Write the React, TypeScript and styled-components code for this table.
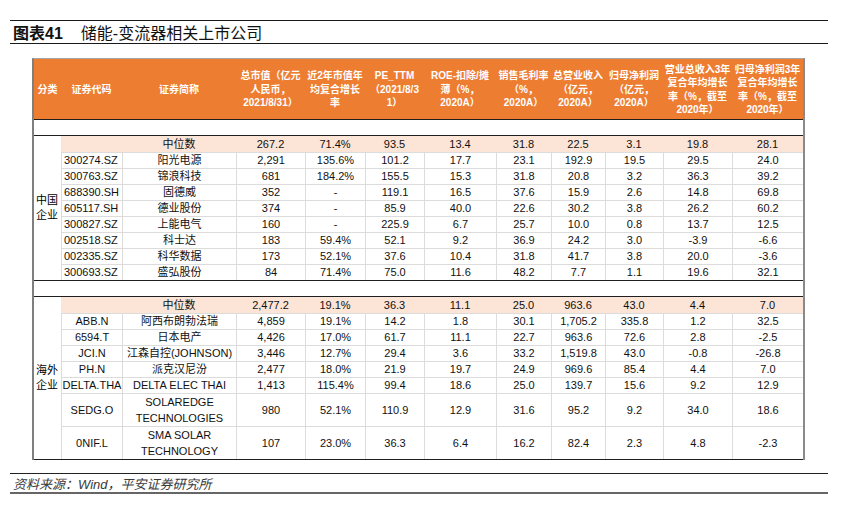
import React from "react";
import styled, { createGlobalStyle } from "styled-components";

const COLS = "27px 61px 114px 69px 60px 59px 72px 55px 54px 58px 69px 71px";
const FONT = `"Liberation Sans", "Noto Sans CJK SC", sans-serif`;

type Row = { code: string; name: string; values: string[]; tall?: boolean };

const HEADERS: string[][] = [
  ["分类"],
  ["证券代码"],
  ["证券简称"],
  ["总市值（亿元", "人民币，", "2021/8/31）"],
  ["近2年市值年", "均复合增长", "率"],
  ["PE_TTM", "（2021/8/3", "1）"],
  ["ROE-扣除/摊", "薄（%，", "2020A）"],
  ["销售毛利率", "（%，", "2020A）"],
  ["总营业收入", "（亿元，", "2020A）"],
  ["归母净利润", "（亿元，", "2020A）"],
  ["营业总收入3年", "复合年均增长", "率（%，截至", "2020年）"],
  ["归母净利润3年", "复合年均增长", "率（%，截至", "2020年）"],
];

const CHINA_MEDIAN = ["267.2", "71.4%", "93.5", "13.4", "31.8", "22.5", "3.1", "19.8", "28.1"];
const CHINA: Row[] = [
  { code: "300274.SZ", name: "阳光电源", values: ["2,291", "135.6%", "101.2", "17.7", "23.1", "192.9", "19.5", "29.5", "24.0"] },
  { code: "300763.SZ", name: "锦浪科技", values: ["681", "184.2%", "155.5", "15.3", "31.8", "20.8", "3.2", "36.3", "39.2"] },
  { code: "688390.SH", name: "固德威", values: ["352", "-", "119.1", "16.5", "37.6", "15.9", "2.6", "14.8", "69.8"] },
  { code: "605117.SH", name: "德业股份", values: ["374", "-", "85.9", "40.0", "22.6", "30.2", "3.8", "26.2", "60.2"] },
  { code: "300827.SZ", name: "上能电气", values: ["160", "-", "225.9", "6.7", "25.7", "10.0", "0.8", "13.7", "12.5"] },
  { code: "002518.SZ", name: "科士达", values: ["183", "59.4%", "52.1", "9.2", "36.9", "24.2", "3.0", "-3.9", "-6.6"] },
  { code: "002335.SZ", name: "科华数据", values: ["173", "52.1%", "37.6", "10.4", "31.8", "41.7", "3.8", "20.0", "-3.6"] },
  { code: "300693.SZ", name: "盛弘股份", values: ["84", "71.4%", "75.0", "11.6", "48.2", "7.7", "1.1", "19.6", "32.1"] },
];

const WORLD_MEDIAN = ["2,477.2", "19.1%", "36.3", "11.1", "25.0", "963.6", "43.0", "4.4", "7.0"];
const WORLD: Row[] = [
  { code: "ABB.N", name: "阿西布朗勃法瑞", values: ["4,859", "19.1%", "14.2", "1.8", "30.1", "1,705.2", "335.8", "1.2", "32.5"] },
  { code: "6594.T", name: "日本电产", values: ["4,426", "17.0%", "61.7", "11.1", "22.7", "963.6", "72.6", "2.8", "-2.5"] },
  { code: "JCI.N", name: "江森自控(JOHNSON)", values: ["3,446", "12.7%", "29.4", "3.6", "33.2", "1,519.8", "43.0", "-0.8", "-26.8"] },
  { code: "PH.N", name: "派克汉尼汾", values: ["2,477", "18.0%", "21.9", "19.7", "24.9", "969.6", "85.4", "4.4", "7.0"] },
  { code: "DELTA.THA", name: "DELTA ELEC THAI", values: ["1,413", "115.4%", "99.4", "18.6", "25.0", "139.7", "15.6", "9.2", "12.9"] },
  { code: "SEDG.O", name: "SOLAREDGE TECHNOLOGIES", tall: true, values: ["980", "52.1%", "110.9", "12.9", "31.6", "95.2", "9.2", "34.0", "18.6"] },
  { code: "0NIF.L", name: "SMA SOLAR TECHNOLOGY", tall: true, values: ["107", "23.0%", "36.3", "6.4", "16.2", "82.4", "2.3", "4.8", "-2.3"] },
];

const GlobalStyle = createGlobalStyle`
  body {
    margin: 0;
    background: #fff;
    font-family: ${FONT};
    color: #000;
  }
`;

const Page = styled.div`
  width: 818px;
  padding: 20px 15px 0 10px;
`;

const TitleBar = styled.div`
  display: flex;
  align-items: center;
  height: 22px;
  padding-left: 3px;
  border-top: 1px solid #1a1a1a;
  border-bottom: 1px solid #1a1a1a;
  font-size: 16px;
  color: #111;
`;

const TitleNo = styled.span`
  font-weight: bold;
  margin-right: 18px;
`;

const TitleText = styled.span`
  letter-spacing: 0;
`;

const TableBox = styled.div`
  width: 769px;
  margin: 14px 0 0 22px;
  border-top: 1px solid #a6a6a6;
  border-left: 2px solid #7f7f7f;
  border-right: 2px solid #8a8a8a;
`;

const HeadRow = styled.div`
  display: grid;
  grid-template-columns: ${COLS};
  height: 60px;
  background: #ed7d31;
  border-bottom: 1px solid #1f1f1f;
`;

const HeadCell = styled.div`
  display: flex;
  align-items: center;
  justify-content: center;
  text-align: center;
  color: #fff;
  font-weight: bold;
  font-size: 10px;
  line-height: 13.4px;
  white-space: nowrap;
  padding-top: 1px;
`;

const Spacer = styled.div`
  height: 15px;
  border-bottom: 1px solid #1f1f1f;
`;

const Group = styled.div`
  display: grid;
  grid-template-columns: ${COLS};
  border-bottom: 1px solid #1f1f1f;
  font-size: 11px;
`;

const GroupLabel = styled.div<{ $rows: number }>`
  grid-column: 1;
  grid-row: 1 / span ${(p) => p.$rows};
  display: flex;
  align-items: center;
  padding-left: 2px;
  line-height: 15px;
`;

const Cell = styled.div<{ $align?: "left" | "center"; $median?: boolean; $tall?: boolean }>`
  display: flex;
  align-items: center;
  justify-content: ${(p) => (p.$align === "left" ? "flex-start" : "center")};
  padding-left: ${(p) => (p.$align === "left" ? "2px" : "0")};
  text-align: center;
  white-space: ${(p) => (p.$tall ? "normal" : "nowrap")};
  min-height: ${(p) => (p.$median ? "16px" : "15px")};
  line-height: ${(p) => (p.$tall ? "16px" : "15px")};
  background: ${(p) => (p.$median ? "#fce4d6" : "transparent")};
  border-top: ${(p) => (p.$median ? "none" : "1px solid #dcdcdc")};
  border-left: ${(p) => (p.$median ? "none" : "1px solid #dcdcdc")};
  color: #111;
`;

const Footer = styled.div`
  display: flex;
  align-items: center;
  height: 18px;
  margin-top: 13px;
  padding-left: 3px;
  border-top: 1px solid #222;
  border-bottom: 2px solid #666;
  font-size: 13px;
  font-style: italic;
  color: #3a3a3a;
`;

function DataGroup({
  label,
  median,
  rows,
  codeAlign,
}: {
  label: [string, string];
  median: string[];
  rows: Row[];
  codeAlign: "left" | "center";
}) {
  return (
    <Group>
      <GroupLabel $rows={rows.length + 1}>
        {label[0]}
        <br />
        {label[1]}
      </GroupLabel>
      <Cell $median />
      <Cell $median>中位数</Cell>
      {median.map((v, i) => (
        <Cell key={"m" + i} $median>
          {v}
        </Cell>
      ))}
      {rows.map((r) => (
        <React.Fragment key={r.code}>
          <Cell $align={codeAlign}>{r.code}</Cell>
          <Cell $tall={r.tall}>{r.name}</Cell>
          {r.values.map((v, i) => (
            <Cell key={i}>{v}</Cell>
          ))}
        </React.Fragment>
      ))}
    </Group>
  );
}

export default function App() {
  return (
    <Page>
      <GlobalStyle />
      <TitleBar>
        <TitleNo>图表41</TitleNo>
        <TitleText>储能-变流器相关上市公司</TitleText>
      </TitleBar>

      <TableBox>
        <HeadRow>
          {HEADERS.map((lines, i) => (
            <HeadCell key={i}>
              <div>
                {lines.map((l, j) => (
                  <div key={j}>{l}</div>
                ))}
              </div>
            </HeadCell>
          ))}
        </HeadRow>
        <Spacer />
        <DataGroup label={["中国", "企业"]} median={CHINA_MEDIAN} rows={CHINA} codeAlign="left" />
        <Spacer />
        <DataGroup label={["海外", "企业"]} median={WORLD_MEDIAN} rows={WORLD} codeAlign="center" />
      </TableBox>

      <Footer>资料来源：Wind，平安证券研究所</Footer>
    </Page>
  );
}
